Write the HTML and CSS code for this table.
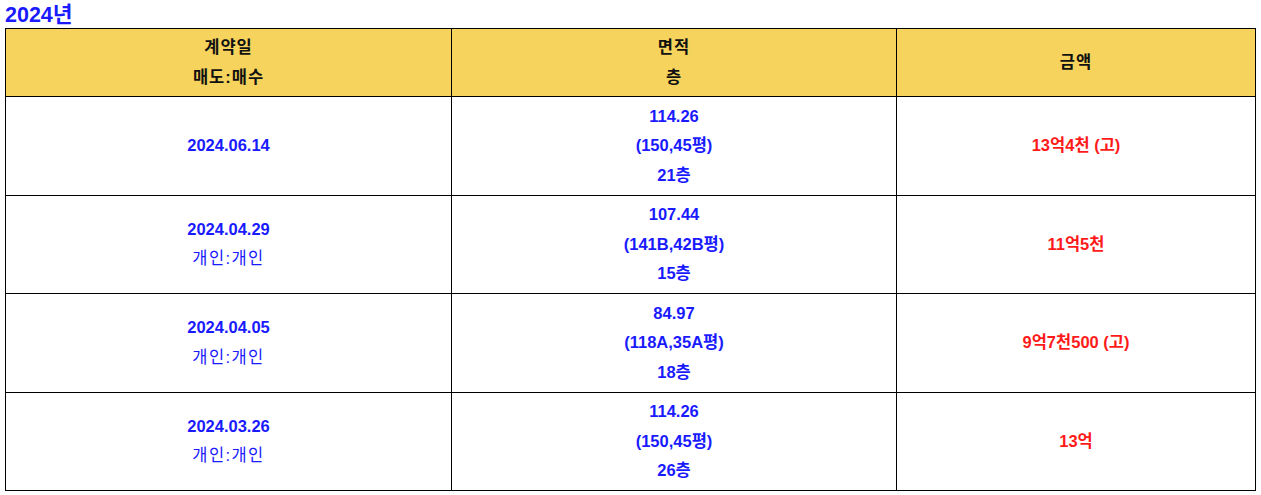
FILE: index.html
```html
<!DOCTYPE html>
<html lang="ko">
<head>
<meta charset="utf-8">
<link rel="stylesheet" href="styles.css">
</head>
<body>
<div class="title">2024년</div>
<table class="deals">
  <colgroup>
    <col class="c1"><col class="c2"><col class="c3">
  </colgroup>
  <thead>
    <tr>
      <th>계약일<br>매도:매수</th>
      <th>면적<br>층</th>
      <th>금액</th>
    </tr>
  </thead>
  <tbody>
    <tr>
      <td class="blue">2024.06.14</td>
      <td class="blue">114.26<br>(150,45평)<br>21층</td>
      <td class="red">13억4천 (고)</td>
    </tr>
    <tr>
      <td class="blue">2024.04.29<br><span class="plain">개인:개인</span></td>
      <td class="blue">107.44<br>(141B,42B평)<br>15층</td>
      <td class="red">11억5천</td>
    </tr>
    <tr>
      <td class="blue">2024.04.05<br><span class="plain">개인:개인</span></td>
      <td class="blue">84.97<br>(118A,35A평)<br>18층</td>
      <td class="red">9억7천500 (고)</td>
    </tr>
    <tr>
      <td class="blue">2024.03.26<br><span class="plain">개인:개인</span></td>
      <td class="blue">114.26<br>(150,45평)<br>26층</td>
      <td class="red">13억</td>
    </tr>
  </tbody>
</table>
</body>
</html>
```

FILE: styles.css
```css
html, body {
  background: #ffffff;
}
body {
  margin: 3px 5px 0 5px;
  font-family: "Liberation Sans", "Noto Sans CJK KR", sans-serif;
}
.title {
  font-size: 21.5px;
  font-weight: bold;
  line-height: 25px;
  color: #1a1aff;
}
.deals {
  border-collapse: collapse;
  table-layout: fixed;
  width: 1250px;
  font-size: 16.5px;
  font-weight: bold;
  line-height: 29.5px;
  text-align: center;
}
.c1 { width: 446px; }
.c2 { width: 445px; }
.c3 { width: 359px; }
.deals th,
.deals td {
  border: 1px solid #000000;
  padding: 4.5px 4px;
  vertical-align: middle;
}
.deals th {
  background: #f6d35c;
  color: #111111;
  padding: 4px 4px;
  letter-spacing: 1px;
}
.blue { color: #1a1aff; }
.red { color: #ff1a1a; }
.plain {
  font-weight: normal;
  letter-spacing: 1.4px;
}
```
